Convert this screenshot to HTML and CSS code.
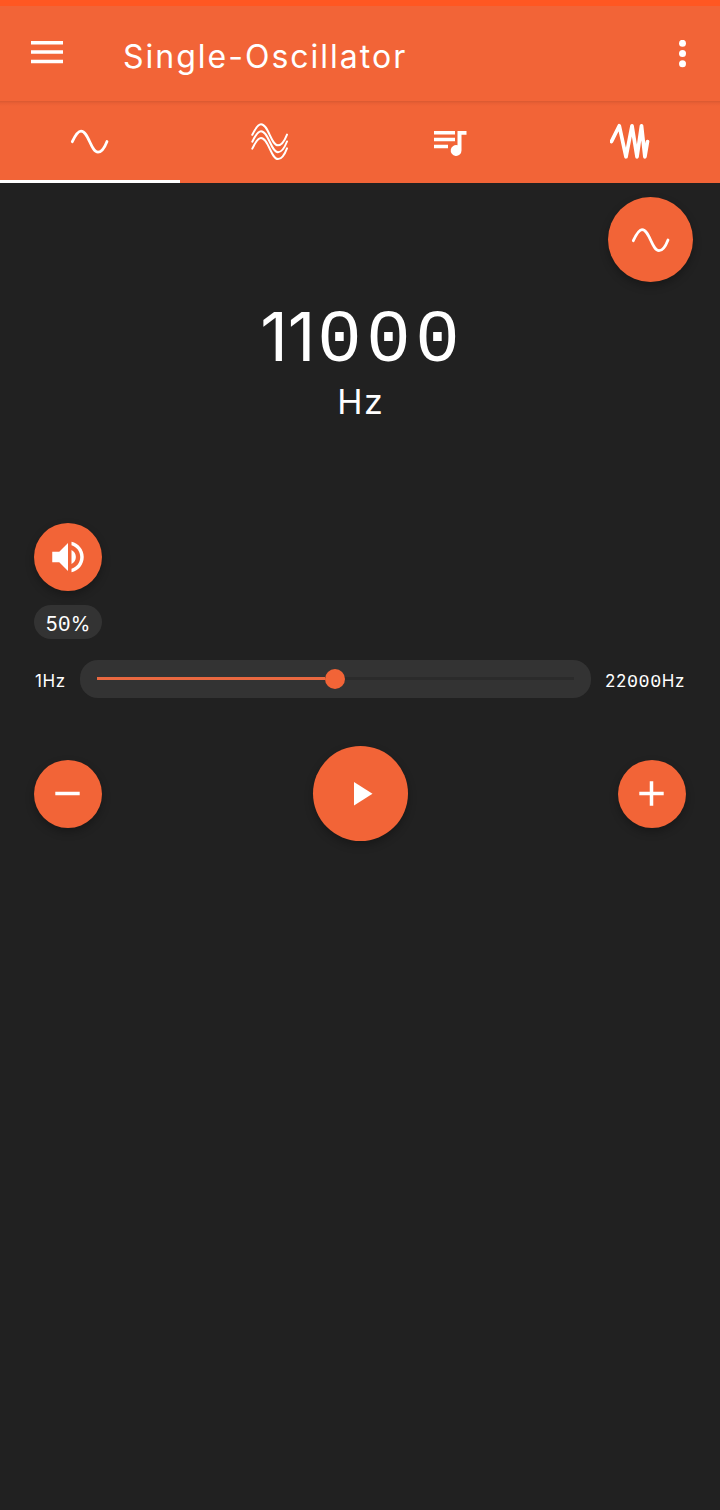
FILE: index.html
```html
<!DOCTYPE html>
<html lang="en">
<head>
<meta charset="utf-8">
<title>Single-Oscillator</title>
<link rel="stylesheet" href="styles.css">
</head>
<body>
<div class="status"></div>
<header class="appbar">
  <svg class="menu" width="32" height="26" viewBox="0 0 32 26"><path d="M0 2.700h32M0 12h32M0 21.500h32" stroke="#fff" stroke-width="3.600"/></svg>
  <h1 class="title">Single-Oscillator</h1>
  <svg class="more" width="8" height="28" viewBox="0 0 8 28" fill="#fff"><circle cx="3.500" cy="3.300" r="3.500"/><circle cx="3.500" cy="13.500" r="3.500"/><circle cx="3.500" cy="23.800" r="3.500"/></svg>
</header>
<nav class="tabs">
  <div class="tab active"><svg width="40" height="40" viewBox="0 0 40 40"><path class="wave" d="M2.300 20.700C5 15 8 10.200 11 10.200C18.500 10.200 21 31.200 28 31.200C31.500 31.200 34.500 27 37 20.500"/></svg></div>
  <div class="tab"><svg width="40" height="40" viewBox="0 0 40 40"><g class="wave thin"><path d="M2.300 13.800C5 8.300 8 3.300 11 3.300C18.500 3.300 21 24.300 28 24.300C31.500 24.300 34.500 20 37 13.600"/><path d="M2.300 20.700C5 15.200 8 10.200 11 10.200C18.500 10.200 21 31.200 28 31.200C31.500 31.200 34.500 27 37 20.500"/><path d="M2.300 27.600C5 22.100 8 17.100 11 17.100C18.500 17.100 21 38.100 28 38.100C31.500 38.100 34.500 34 37 27.400"/></g></svg></div>
  <div class="tab"><svg width="40" height="40" viewBox="0 0 40 40"><path d="M4 11.700h21M4 18.500h21M4 25.500h14" stroke="#fff" stroke-width="3.500" fill="none"/><path d="M27.500 10h9v3.700h-5v15.800a5.400 5.400 0 1 1-4-5.200z" fill="#fff"/></svg></div>
  <div class="tab"><svg width="40" height="40" viewBox="0 0 40 40"><path d="M1.500 20.500 9.300 4.800 16 35.800 22 4.800 27 35.800 31.500 4.800 34.900 35.800 37.500 20.500" fill="none" stroke="#fff" stroke-width="3.700" stroke-linecap="round" stroke-linejoin="round"/></svg></div>
</nav>
<main>
  <button class="fab shape" aria-label="Waveform"><svg width="40" height="40" viewBox="0 0 40 40"><path class="wave" d="M2.300 20.700C5 15 8 9.700 11 9.700C18.500 9.700 21 30.700 28 30.700C31.500 30.700 34.500 26.500 37 20"/></svg></button>
  <div class="frequency"><span class="one">1</span><span class="one second">1</span><span class="zero">0</span><span class="zero">0</span><span class="zero">0</span></div>
  <div class="unit">Hz</div>
  <section class="volume">
    <button class="fab small" aria-label="Volume"><svg width="42" height="42" viewBox="0 0 24 24" fill="#fff"><path d="M3 9v6h4l5 5V4L7 9H3zm13.500 3c0-1.770-1.020-3.290-2.500-4.030v8.050c1.480-.730 2.500-2.250 2.500-4.020zM14 3.230v2.060c2.890.860 5 3.540 5 6.710s-2.110 5.850-5 6.710v2.060c4.010-.910 7-4.490 7-8.770s-2.990-7.860-7-8.770z"/></svg></button>
    <div class="percent">5<span class="dotted">0</span>%</div>
  </section>
  <section class="range">
    <span class="min">1Hz</span>
    <div class="slider"><div class="track"><div class="fill"></div><div class="thumb"></div></div></div>
    <span class="max">22<span class="dotted">000</span>Hz</span>
  </section>
  <section class="controls">
    <button class="fab small" aria-label="Decrease"><svg width="26" height="26" viewBox="0 0 26 26"><path d="M.3 12.500h24.400" stroke="#fff" stroke-width="3.500"/></svg></button>
    <button class="fab play" aria-label="Play"><svg width="20" height="24" viewBox="0 0 20 24"><path d="M1 0v23.500l18.500-11.750z" fill="#fff"/></svg></button>
    <button class="fab small" aria-label="Increase"><svg width="26" height="26" viewBox="0 0 26 26"><path d="M.3 12.500h24.400M12.500.3v24.400" stroke="#fff" stroke-width="3.500"/></svg></button>
  </section>
</main>
</body>
</html>
```
FILE: styles.css
```css
* { box-sizing: border-box; }
body {
  margin: 0;
  width: 720px;
  min-height: 1510px;
  background: #212121;
  color: #fff;
  font-family: Inter, "Noto Sans", sans-serif;
}
svg { display: block; flex: none; }
.status { height: 6px; background: #ff5722; }
.appbar {
  height: 95px;
  padding: 34px 33px 0 31px;
  display: flex;
  align-items: flex-start;
  background: #f26437;
}
.title {
  margin: 0 0 0 60px;
  padding-top: 1px;
  font-size: 32px;
  line-height: 32px;
  font-weight: 400;
  letter-spacing: 2px;
  white-space: nowrap;
}
.more { margin-left: auto; }
.tabs {
  display: grid;
  grid-template-columns: repeat(4, 180px);
  height: 82px;
  background: linear-gradient(#d95931, #e95f35 2px, #f26437 5px);
}
.tab { display: flex; justify-content: center; padding-top: 20px; border-bottom: 3px solid transparent; }
.active { border-color: #fff; }
.wave { fill: none; stroke: #fff; stroke-width: 2.800px; stroke-linecap: round; }
.thin { stroke-width: 2px; }
main { display: flex; flex-direction: column; padding: 14px 34px 0; }
.fab {
  display: flex;
  align-items: center;
  justify-content: center;
  padding: 0;
  border: 0;
  border-radius: 50%;
  background: #f26437;
  box-shadow: 0 4px 8px rgba(0, 0, 0, .28);
}
.small { width: 68px; height: 68px; }
.shape { width: 85px; height: 85px; align-self: flex-end; margin-right: -7px; }
.play { width: 95px; height: 95px; padding-left: 5px; }
.frequency {
  display: flex;
  align-items: baseline;
  height: 84px;
  margin: 12px 0 0 226px;
  font-size: 68px;
  line-height: 84px;
}
.one { width: 28px; display: flex; justify-content: center; }
.second { width: 27px; }
.zero {
  width: 49px;
  text-align: center;
  font-family: "Liberation Mono", monospace;
  font-size: 74px;
}
.unit { margin-top: 4px; text-align: center; font-size: 34px; line-height: 40px; letter-spacing: 1.500px; text-indent: 1.500px; }
.volume { display: flex; flex-direction: column; gap: 14px; margin-top: 101px; }
.percent {
  width: 68px;
  height: 34px;
  border-radius: 17px;
  background: #333;
  text-align: center;
  font-size: 20px;
  line-height: 38px;
}
.dotted { font-family: "Liberation Mono", monospace; font-size: 1.080em; line-height: 0; }
.range { display: flex; align-items: center; height: 38px; margin-top: 21px; white-space: nowrap; font-size: 17px; line-height: 20px; letter-spacing: .6px; }
.min, .max { padding-top: 4px; }
.min { width: 46px; padding-left: 1px; }
.slider { width: 511px; height: 38px; padding: 17px; border-radius: 18px; background: #333; }
.track { display: flex; align-items: center; height: 3px; background: #2b2b2b; }
.fill { width: 228px; height: 3px; background: #e96840; }
.thumb { width: 20px; height: 20px; flex: none; border-radius: 50%; background: #f26437; }
.max { margin-left: 14px; }
.controls { display: flex; align-items: center; justify-content: space-between; margin-top: 48px; }
```
